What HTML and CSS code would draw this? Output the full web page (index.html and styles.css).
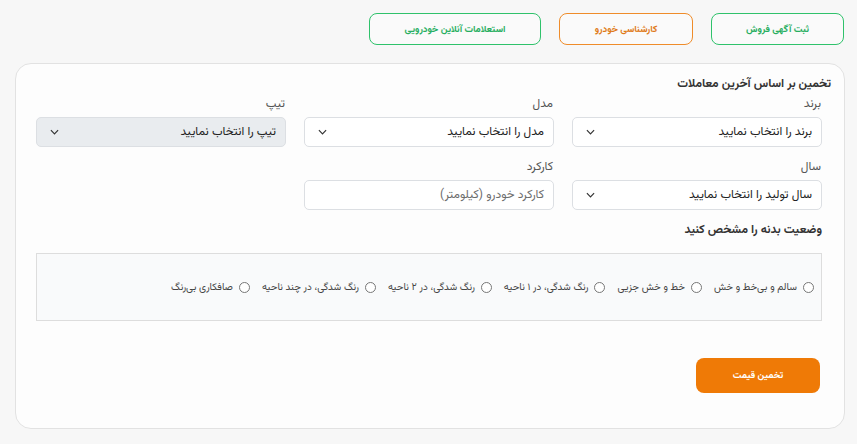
FILE: index.html
```html
<!DOCTYPE html>
<html lang="fa" dir="rtl">
<head>
<meta charset="utf-8">
<link rel="stylesheet" href="styles.css">
</head>
<body>
<div class="tabs">
  <a class="tab tab-green">ثبت آگهی فروش</a>
  <a class="tab tab-orange">کارشناسی خودرو</a>
  <a class="tab tab-green tab-wide">استعلامات آنلاین خودرویی</a>
</div>
<div class="card">
  <div class="title">تخمین بر اساس آخرین معاملات</div>
  <div class="grid">
    <div class="field">
      <div class="label">برند</div>
      <div class="select"><span>برند را انتخاب نمایید</span><svg class="chev" viewBox="0 0 10 6" width="9" height="6"><path d="M1 1l4 4 4-4" fill="none" stroke="#333" stroke-width="1.3"/></svg></div>
    </div>
    <div class="field">
      <div class="label">مدل</div>
      <div class="select"><span>مدل را انتخاب نمایید</span><svg class="chev" viewBox="0 0 10 6" width="9" height="6"><path d="M1 1l4 4 4-4" fill="none" stroke="#333" stroke-width="1.3"/></svg></div>
    </div>
    <div class="field">
      <div class="label">تیپ</div>
      <div class="select disabled"><span>تیپ را انتخاب نمایید</span><svg class="chev" viewBox="0 0 10 6" width="9" height="6"><path d="M1 1l4 4 4-4" fill="none" stroke="#333" stroke-width="1.3"/></svg></div>
    </div>
    <div class="field row2">
      <div class="label">سال</div>
      <div class="select"><span>سال تولید را انتخاب نمایید</span><svg class="chev" viewBox="0 0 10 6" width="9" height="6"><path d="M1 1l4 4 4-4" fill="none" stroke="#333" stroke-width="1.3"/></svg></div>
    </div>
    <div class="field row2">
      <div class="label">کارکرد</div>
      <div class="input"><span class="ph">کارکرد خودرو (کیلومتر)</span></div>
    </div>
  </div>
  <div class="subtitle">وضعیت بدنه را مشخص کنید</div>
  <div class="radios">
    <label class="radio"><span class="circle"></span>سالم و بی‌خط و خش</label>
    <label class="radio"><span class="circle"></span>خط و خش جزیی</label>
    <label class="radio"><span class="circle"></span>رنگ شدگی، در ۱ ناحیه</label>
    <label class="radio"><span class="circle"></span>رنگ شدگی، در ۲ ناحیه</label>
    <label class="radio"><span class="circle"></span>رنگ شدگی، در چند ناحیه</label>
    <label class="radio"><span class="circle"></span>صافکاری بی‌رنگ</label>
  </div>
  <div class="actions">
    <button class="btn">تخمین قیمت</button>
  </div>
</div>
</body>
</html>
```

FILE: styles.css
```css
* { box-sizing: border-box; }
body {
  margin: 0;
  background: #f7f7f7;
  font-family: "Vazirmatn", "Noto Sans Arabic", "Noto Naskh Arabic", "DejaVu Sans", sans-serif;
  color: #333;
  font-size: 12px;
}
.tabs {
  display: flex;
  gap: 18px;
  padding: 13px 13px 0 0;
}
.tab {
  display: flex;
  align-items: center;
  justify-content: center;
  width: 133px;
  height: 32px;
  border: 1px solid #2fc26b;
  border-radius: 8px;
  font-size: 9.5px;
  font-weight: bold;
  color: #27ae60;
  background: #fafafa;
}
.tab-orange { border-color: #ef8c2a; color: #e07b18; width: 134px; }
.tab-wide { width: 172px; }
.card {
  margin: 18px 12px 0 15px;
  background: #fdfdfd;
  border: 1px solid #e2e2e2;
  border-radius: 16px;
  padding: 10px 22px 35px 20px;
}
.title {
  font-weight: bold;
  font-size: 12px;
  line-height: 20px;
  margin-right: -9px;
  color: #333;
}
.grid {
  display: grid;
  grid-template-columns: repeat(3, 250px);
  column-gap: 18px;
  row-gap: 11px;
  margin-top: 1px;
}
.label {
  font-size: 12px;
  line-height: 18px;
  color: #555;
  margin-bottom: 4px;
  padding-right: 1px;
}
.select, .input {
  height: 30px;
  border: 1px solid #dcdfe3;
  border-radius: 5px;
  background: #fff;
  display: flex;
  align-items: center;
  justify-content: space-between;
  padding: 0 9px 0 13px;
  font-size: 12px;
  color: #222;
}
.select.disabled { background: #e9ecef; }
.ph { color: #6c6c6c; }
.chev { display: block; }
.subtitle {
  font-weight: bold;
  font-size: 12px;
  line-height: 20px;
  margin-top: 10px;
  color: #333;
}
.radios {
  margin-top: 13px;
  height: 68px;
  border: 1px solid #dddddd;
  background: #f9fafb;
  display: flex;
  align-items: center;
  gap: 12px;
  padding: 0 7px 0 0;
  font-size: 10px;
  color: #444;
}
.radio { display: flex; align-items: center; gap: 6px; }
.circle {
  width: 11px;
  height: 11px;
  border: 1px solid #777;
  border-radius: 50%;
  background: #fff;
}
.actions {
  margin-top: 37px;
  display: flex;
}
.btn {
  width: 124px;
  height: 35px;
  border: none;
  border-radius: 8px;
  background: #ef7a06;
  color: #fff;
  font-family: inherit;
  font-weight: bold;
  font-size: 9.5px;
  margin-right: 2px;
}
```
